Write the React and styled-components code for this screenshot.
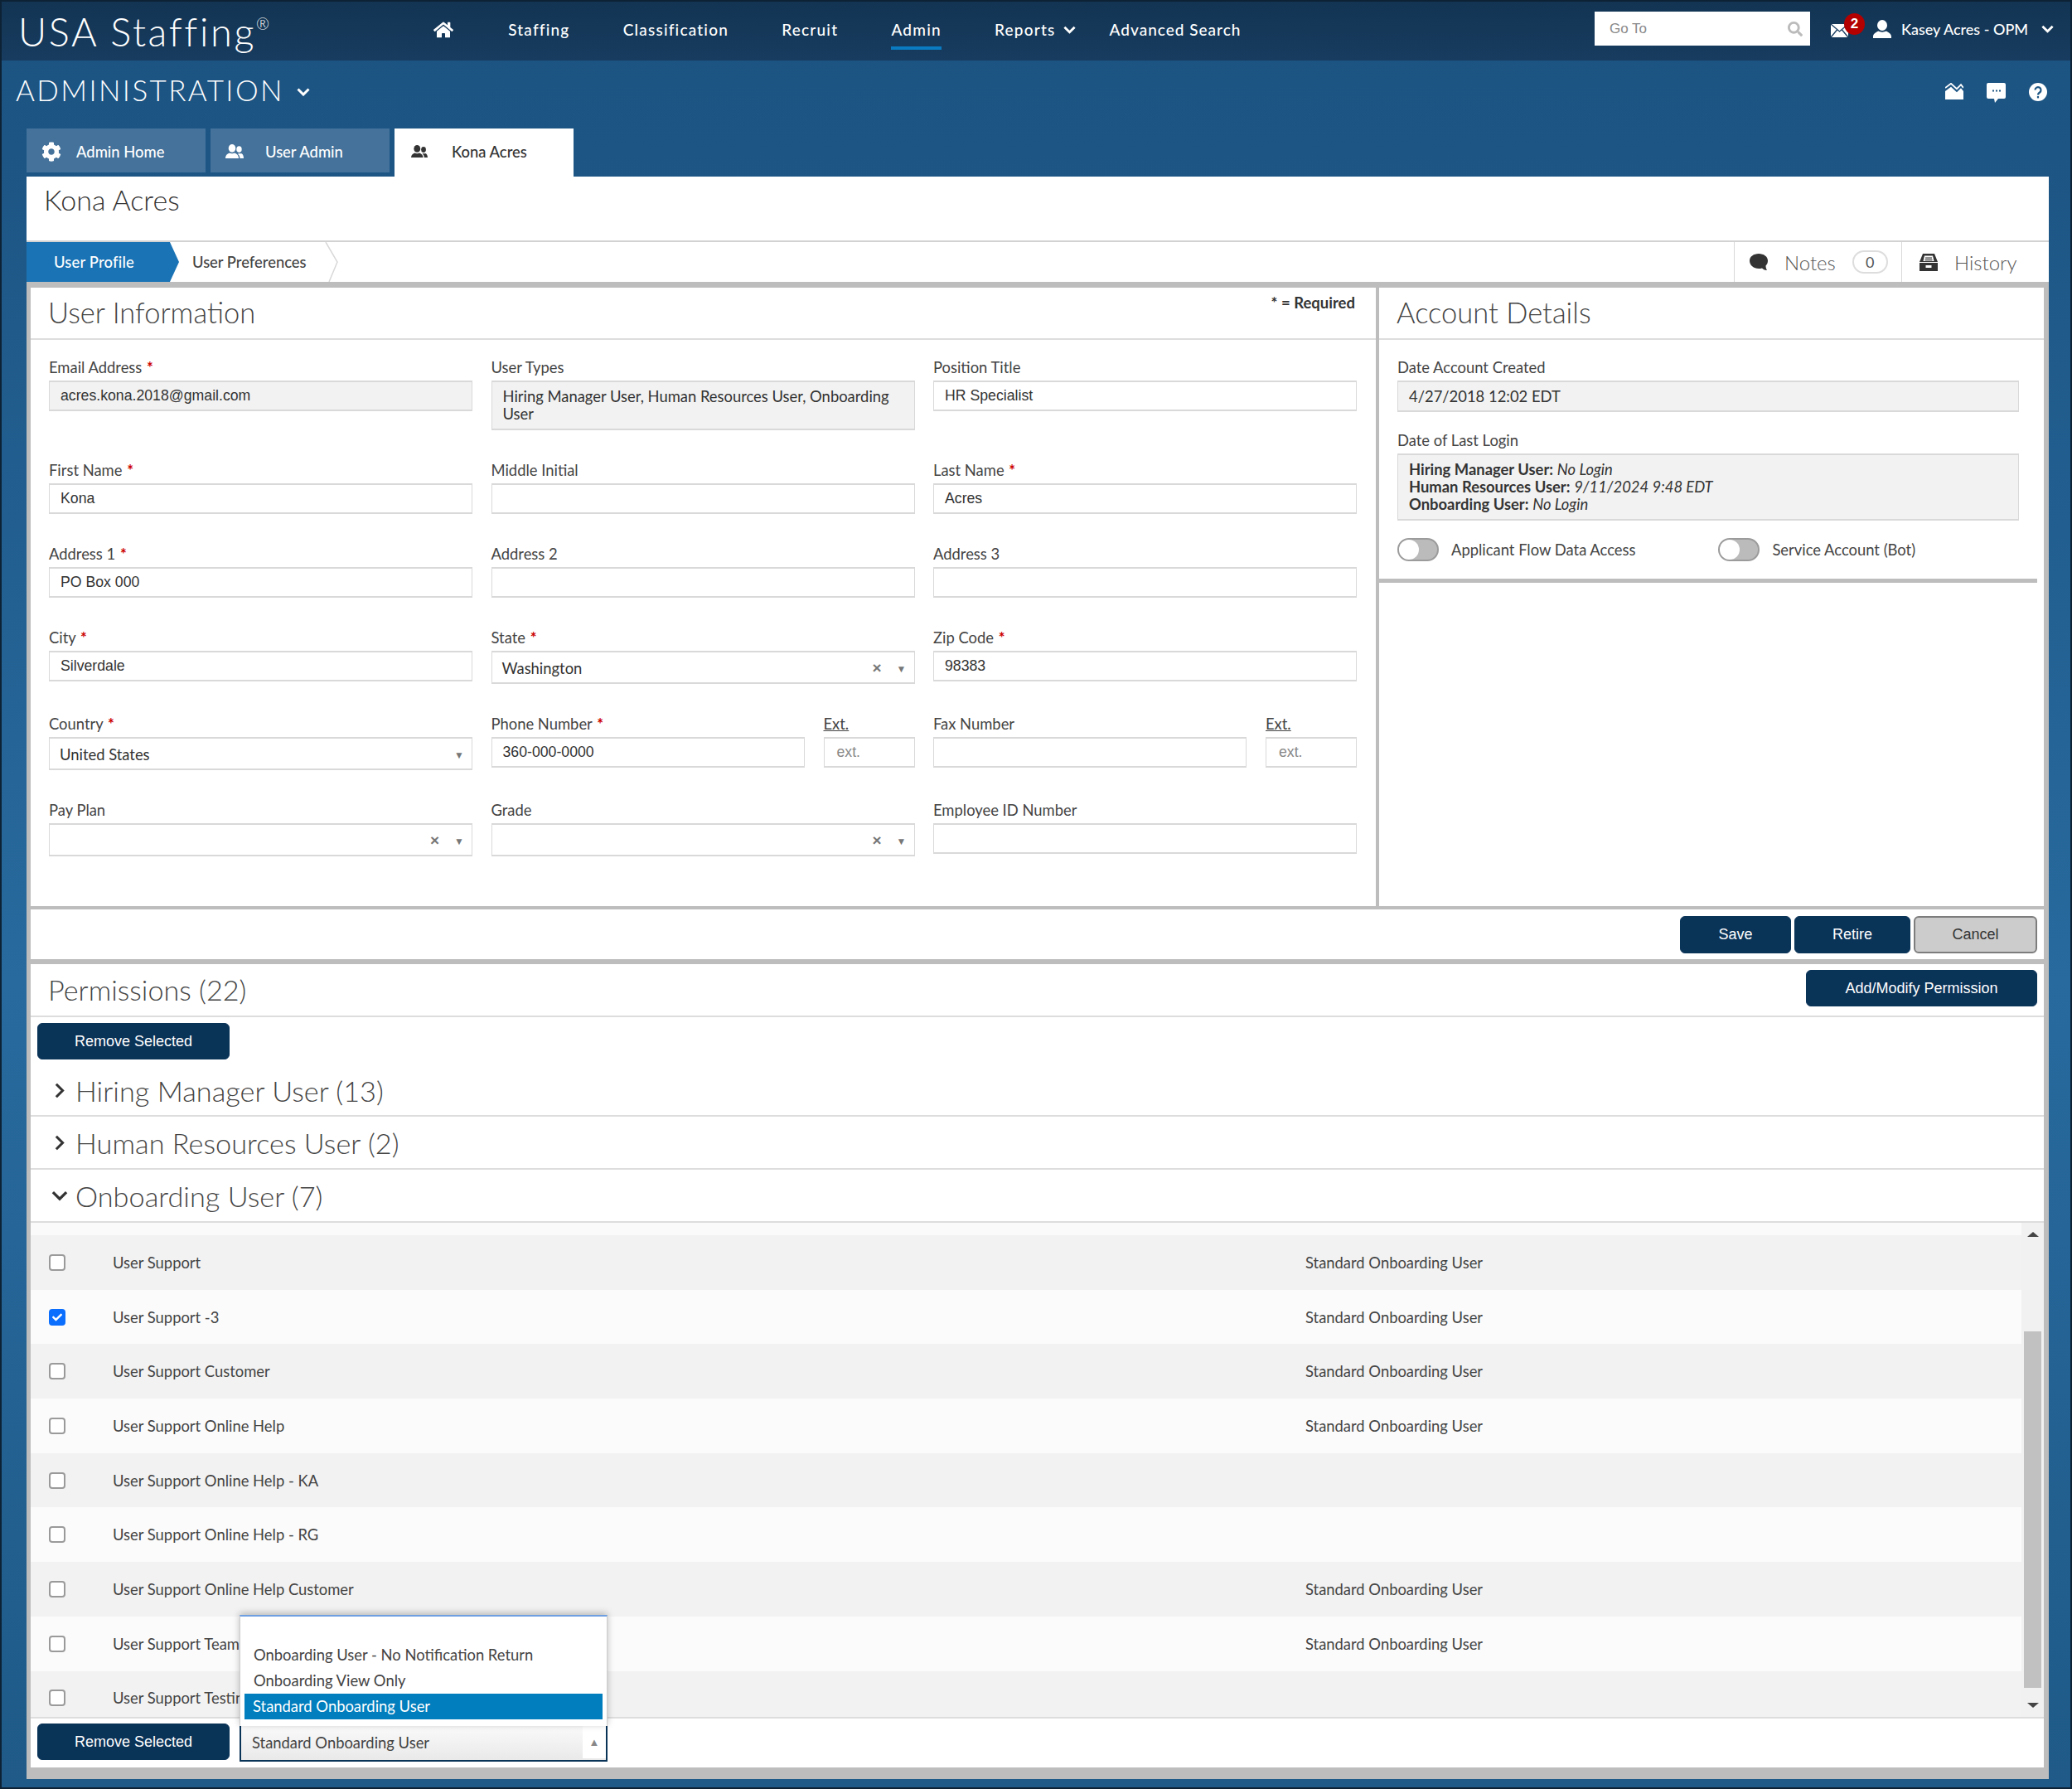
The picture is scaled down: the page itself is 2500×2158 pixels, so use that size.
import React from "react";
import styled, { createGlobalStyle } from "styled-components";
import { FaHome, FaCog, FaSearch, FaCheck } from "react-icons/fa";

const GlobalStyle = createGlobalStyle`
  html, body { margin: 0; padding: 0; background: #1f5a88; }
  * { box-sizing: border-box; }
  body { font-family: "Lato", "Open Sans", sans-serif; color: #444; }
`;

const Frame = styled.div`
  position: relative;
  width: 2500px;
  height: 2158px;
  overflow: hidden;
  display: flex;
  flex-direction: column;
  background: linear-gradient(180deg, #1b5280 0%, #286a9e 55%, #1f5a88 100%);
  outline: 2px solid #0d2235;
  outline-offset: -2px;
`;

const TopBar = styled.header`
  height: 73px;
  flex: none;
  display: flex;
  align-items: center;
  padding-left: 22px;
  background: linear-gradient(180deg, #133453, #173c5f);
  color: #fff;
`;

const Logo = styled.div`
  width: 501px;
  font-size: 47px;
  font-weight: 300;
  letter-spacing: 2.6px;
  line-height: 73px;
  padding-top: 4px;
  sup { font-size: 19px; vertical-align: 20px; line-height: 0; letter-spacing: 0; }
`;

const Nav = styled.nav`
  display: flex;
  align-items: center;
  gap: 64.2px;
  flex: 1;
`;

const NavItem = styled.a`
  position: relative;
  display: flex;
  align-items: center;
  gap: 10px;
  font-size: 19px;
  font-weight: 500;
  letter-spacing: 1.2px;
  height: 40px;
  margin-top: -2px;
  color: #fff;
  ${(p) => p.$active && `
    &::after { content: ""; position: absolute; left: 0; right: 0; bottom: -4px; height: 4px; background: #0a7bc0; }
  `}
  ${(p) => p.$tight && `margin-right: -24px;`}
  ${(p) => p.$home && `margin-right: 2px;`}
  ${(p) => p.$snug && `letter-spacing: 1px;`}
`;

const SearchBox = styled.div`
  width: 260px;
  height: 41px;
  margin-top: -4px;
  background: #fff;
  display: flex;
  align-items: center;
  justify-content: space-between;
  padding: 0 9px 0 18px;
  font-family: "Liberation Sans", sans-serif;
  font-size: 17px;
  color: #888;
  svg { color: #bbb; font-size: 18px; }
`;

const MailWrap = styled.div`
  position: relative;
  margin-left: 24px;
  width: 52px;
  height: 41px;
  display: flex;
  align-items: center;
`;

const Badge = styled.span`
  position: absolute;
  left: 17px;
  top: 0;
  width: 25px;
  height: 26px;
  border-radius: 50%;
  background: #b30000;
  color: #fff;
  font: 700 17px/26px "Liberation Sans", sans-serif;
  text-align: center;
`;

const UserMenu = styled.div`
  display: flex;
  align-items: center;
  font-size: 18px;
  width: 240px;
  margin-top: -3px;
  font-weight: 500;
  color: #fff;
  span { margin: 0 16px 0 12px; }
`;

const SubHeader = styled.div`
  height: 82px;
  flex: none;
  display: flex;
  align-items: center;
  justify-content: space-between;
  padding: 0 30px 8px 19px;
  color: #fff;
`;

const AreaTitle = styled.h1`
  margin: 0 0 5px;
  font-size: 35px;
  font-weight: 300;
  letter-spacing: 2.4px;
  display: flex;
  align-items: center;
  gap: 15px;
  svg { margin-top: 7px; }
`;

const QuickIcons = styled.div`
  display: flex;
  gap: 28px;
  padding-top: 3px;
`;

const TabStrip = styled.div`
  height: 58px;
  flex: none;
  display: flex;
  align-items: flex-end;
  gap: 6px;
  margin-left: 32px;
`;

const Tab = styled.div`
  width: 216px;
  display: flex;
  align-items: center;
  font-size: 18.4px;
  font-weight: 500;
  height: ${(p) => (p.$active ? "58px" : "53px")};
  margin-bottom: ${(p) => (p.$active ? "0" : "5px")};
  background: ${(p) => (p.$active ? "#fff" : "#44729b")};
  color: ${(p) => (p.$active ? "#333" : "#fff")};
  padding: ${(p) => (p.$active ? "0 0 3px 20px" : "2px 0 0 18px")};
  svg { margin-right: ${(p) => p.$gap}px; flex: none; }
`;

const Panel = styled.main`
  margin-left: 32px;
  width: 2440px;
  height: 1933px;
  flex: none;
  background: #bdbdbd;
  display: flex;
  flex-direction: column;
`;

const TitleBar = styled.div`
  height: 79px;
  flex: none;
  background: #fff;
  padding: 7px 0 0 21px;
  font-size: 34px;
  font-weight: 300;
  color: #333;
  border-bottom: 2px solid #d2d2d2;
`;

const StepRow = styled.div`
  height: 48px;
  flex: none;
  background: #fff;
  display: flex;
  align-items: stretch;
`;

const Step = styled.div`
  width: ${(p) => p.$w}px;
  display: flex;
  align-items: center;
  font-size: 18.4px;
  font-weight: 500;
  letter-spacing: ${(p) => (p.$active ? "0.2px" : "0")};
  padding-left: ${(p) => p.$pad}px;
  color: ${(p) => (p.$active ? "#fff" : "#444")};
  background: ${(p) => (p.$active ? "#1a73b5" : "transparent")};
  clip-path: ${(p) => (p.$active ? "polygon(0 0, 94% 0, 100% 50%, 94% 100%, 0 100%)" : "none")};
`;

const StepTip = styled.svg`
  width: 16px;
  height: 48px;
  margin-left: 2px;
`;

const StepTools = styled.div`
  margin-left: auto;
  display: flex;
`;

const StepTool = styled.div`
  display: flex;
  align-items: center;
  font-size: 24px;
  font-weight: 300;
  color: #555;
  border-left: 1px solid #d8d8d8;
  padding-left: ${(p) => p.$pad}px;
  width: ${(p) => p.$w}px;
  svg { color: #333; margin-right: 20px; flex: none; }
`;

const CountPill = styled.span`
  margin-left: 20px;
  width: 43px;
  height: 28px;
  border: 2px solid #ddd;
  border-radius: 14px;
  text-align: center;
  font-size: 18px;
  font-weight: 400;
  line-height: 24px;
`;

const Content = styled.div`
  flex: 1;
  padding: 7px 6px 14px 5px;
  display: flex;
  flex-direction: column;
`;

const FormRow = styled.div`
  height: 746px;
  flex: none;
  display: flex;
  gap: 4px;
`;

const InfoPanel = styled.section`
  width: 1623px;
  background: #fff;
`;

const AccountPanel = styled.section`
  flex: 1;
  background: #fff;
`;

const SectionHead = styled.div`
  height: 63px;
  display: flex;
  justify-content: space-between;
  align-items: flex-start;
  border-bottom: 2px solid #ddd;
  padding: 0 25px 0 21px;
  h2 { margin: 9px 0 0; font-size: 34.5px; font-weight: 300; color: #444; }
`;

const RequiredNote = styled.b`
  font-size: 18.5px;
  font-weight: 700;
  margin-top: 7px;
  color: #333;
`;

const FormGrid = styled.div`
  display: grid;
  grid-template-columns: repeat(3, 511px);
  column-gap: 22.5px;
  row-gap: 36px;
  padding: 21px 0 0 22px;
`;

const Field = styled.div`
  display: flex;
  flex-direction: column;
  min-width: 0;
`;

const SplitField = styled.div`
  display: grid;
  grid-template-columns: 1fr 110px;
  column-gap: 23px;
`;

const Label = styled.label`
  height: 28px;
  line-height: 24px;
  font-size: 18.4px;
  color: #444;
  white-space: nowrap;
  ${(p) => p.$abbr && `text-decoration: underline;`}
  i { color: #c00; font-style: normal; font-weight: 700; margin-left: 1px; }
`;

const Input = styled.div`
  height: 37px;
  border: solid #d9d9d9;
  border-width: 2px 1px;
  background: ${(p) => (p.$readonly ? "#f2f2f2" : "#fff")};
  padding: 0 13px;
  font: 17.7px/33px "Liberation Sans", sans-serif;
  color: ${(p) => (p.$ghost ? "#888" : "#333")};
  ${(p) => p.$ghost && `padding-left: 15px;`}
`;

const TextBox = styled.div`
  min-height: ${(p) => p.$h}px;
  border: solid #d9d9d9;
  border-width: 2px 1px;
  background: #f2f2f2;
  padding: ${(p) => p.$py}px 13px 0;
  font-size: 18.4px;
  line-height: 21px;
  color: #333;
`;

const SelectBox = styled.div`
  height: 40px;
  border: solid #d9d9d9;
  border-width: 2px 1px;
  background: #fff;
  display: flex;
  align-items: center;
  padding: 2px 9px 0 12px;
  font-size: 18.4px;
  color: #333;
  span { flex: 1; }
  b { font: 700 19px "Liberation Sans", sans-serif; color: #777; margin-right: 18px; }
  em { font-style: normal; font-size: 12px; color: #777; }
`;

const AccountBody = styled.div`
  height: 293px;
  margin-right: 8px;
  padding: 21px 22px 0 22px;
  border-bottom: 5px solid #bdbdbd;
`;

const AccountField = styled(Field)`
  margin-bottom: ${(p) => p.$mb}px;
`;

const ToggleRow = styled.div`
  display: flex;
  align-items: center;
  margin-top: 21px;
  font-size: 18.4px;
`;

const Toggle = styled.span`
  width: 50px;
  height: 28px;
  border-radius: 14px;
  background: #bbb;
  border: 2px solid #9b9b9b;
  display: flex;
  flex: none;
  margin-left: ${(p) => p.$ml || 0}px;
  margin-right: 15px;
  &::before { content: ""; width: 24px; height: 24px; border-radius: 50%; background: #fff; }
`;

const ActionRow = styled.div`
  height: 60px;
  margin-top: 4px;
  flex: none;
  background: #fff;
  display: flex;
  justify-content: flex-end;
  align-items: flex-start;
  gap: 4px;
  padding: 8px 8px 0 0;
`;

const Button = styled.button`
  height: ${(p) => p.$h || 44}px;
  width: ${(p) => p.$w}px;
  padding: 0;
  border: 1px solid ${(p) => (p.$grey ? "#7d7d7d" : "#0a3358")};
  border-width: ${(p) => (p.$grey ? "2px" : "1px")};
  border-radius: 6px;
  background: ${(p) => (p.$grey ? "#cccccc" : "#0a3358")};
  color: ${(p) => (p.$grey ? "#333" : "#fff")};
  font: 18px "Liberation Sans", sans-serif;
  flex: none;
`;

const Permissions = styled.section`
  margin-top: 6px;
  flex: 1;
  background: #fff;
  display: flex;
  flex-direction: column;
`;

const PermHead = styled.div`
  height: 64px;
  flex: none;
  display: flex;
  justify-content: space-between;
  align-items: flex-start;
  border-bottom: 2px solid #ddd;
  padding: 7px 8px 0 21px;
  h2 { margin: 3px 0 0; font-size: 34.2px; font-weight: 300; color: #444; }
`;

const RemoveRow = styled.div`
  height: 58px;
  flex: none;
  padding: 7px 0 0 8px;
`;

const Group = styled.div`
  height: ${(p) => p.$h}px;
  flex: none;
  display: flex;
  align-items: center;
  padding-left: 24px;
  border-bottom: 2px solid #ddd;
  font-size: 34.3px;
  font-weight: 300;
  color: #444;
`;

const GroupIcon = styled.span`
  width: 21px;
  margin-right: 9px;
  display: flex;
  justify-content: center;
  color: #333;
`;

const TableArea = styled.div`
  position: relative;
  height: 596px;
  flex: none;
  display: flex;
  background: #fafafa;
  overflow: hidden;
`;

const Rows = styled.div`
  flex: 1;
  padding-top: 15px;
`;

const PermRow = styled.div`
  height: 65.7px;
  display: grid;
  grid-template-columns: 77px 1439px 1fr;
  align-items: center;
  padding-left: 22px;
  font-size: 18.4px;
  color: #444;
  white-space: nowrap;
  background: ${(p) => (p.$odd ? "#f2f2f2" : "#fbfbfb")};
`;

const Check = styled.span`
  width: 20px;
  height: 20px;
  border-radius: 4px;
  border: 2px solid ${(p) => (p.$on ? "#0b6efd" : "#9a9a9a")};
  background: ${(p) => (p.$on ? "#0b6efd" : "#fff")};
  display: flex;
  align-items: center;
  justify-content: center;
  color: #fff;
  font-size: 12px;
`;

const ScrollTrack = styled.div`
  width: 27px;
  flex: none;
  background: #f1f1f1;
  position: relative;
  padding: 131px 3px 0;
`;

const ScrollThumb = styled.div`
  height: 430px;
  background: #c1c1c1;
`;

const ScrollArrow = styled.span`
  position: absolute;
  left: 7px;
  width: 0;
  height: 0;
  border-left: 7px solid transparent;
  border-right: 7px solid transparent;
  ${(p) => (p.$up ? "top: 11px; border-bottom: 6px solid #444;" : "bottom: 11px; border-top: 6px solid #444;")}
`;

const Footer = styled.div`
  height: 61px;
  flex: none;
  border-top: 2px solid #ddd;
  display: flex;
  gap: 12px;
  padding: 6px 0 0 8px;
`;

const FooterSelect = styled.div`
  position: relative;
  width: 444px;
  height: 43px;
  margin-top: 3px;
  border: 2px solid #0a3358;
  border-top: 0;
  display: flex;
  align-items: center;
  background: linear-gradient(180deg, #fafafa, #e9e9e9);
  padding: 0 0 2px 13px;
  font-size: 18.4px;
  color: #444;
  span { flex: 1; }
  em { width: 28px; height: 100%; background: #fff; text-align: center; line-height: 38px; font-style: normal; font-size: 13px; color: #888; }
`;

const DropList = styled.div`
  position: absolute;
  left: -2px;
  bottom: 100%;
  width: 444px;
  height: 134px;
  background: #fff;
  border-top: 2px solid #6f9fe0;
  border-left: 1px solid #ccc;
  border-right: 1px solid #ccc;
  box-shadow: 0 -2px 8px rgba(0, 0, 0, 0.25);
  padding: 31px 5px 0;
  font-size: 18.4px;
  color: #444;
`;

const DropOption = styled.div`
  height: 31px;
  line-height: 31px;
  padding-left: ${(p) => (p.$sel ? "10px" : "11px")};
  background: ${(p) => (p.$sel ? "#007ebd" : "transparent")};
  color: ${(p) => (p.$sel ? "#fff" : "#444")};
`;

const Chevron = ({ dir = "down", w, h, sw = 3 }) => (
  <svg width={w} height={h} viewBox={dir === "down" ? "0 0 16 10" : "0 0 10 16"} fill="none" stroke="currentColor" strokeWidth={sw}>
    <path d={dir === "down" ? "M1.5 1.5L8 8l6.5-6.5" : "M1.5 1.5L8 8l-6.5 6.5"} />
  </svg>
);

const PeopleIcon = ({ w = 22 }) => (
  <svg width={w} height={w * 0.78} viewBox="0 0 22 17" fill="currentColor">
    <ellipse cx="8" cy="4.8" rx="4.3" ry="4.8" />
    <path d="M0 17c0-4 2.5-5.5 5-6.5 1.5 1 4.5 1 6 0 2.5 1 5 2.5 5 6.500z" />
    <ellipse cx="16.5" cy="6" rx="3.2" ry="3.8" />
    <path d="M16 10.8c1 .6 2 .6 3 0 1.5.6 3 2 3 6.200h-4.500c0-2.500-1-4.500-2.500-5.200z" />
  </svg>
);

const MailIcon = () => (
  <svg width="23" height="18" viewBox="0 0 23 18">
    <path d="M1 1h21v16H1z" fill="#fff" />
    <path d="M1 1l10.5 9L22 1M1 17l7.5-9M22 17l-7.5-9" fill="none" stroke="#173c5f" strokeWidth="1.3" />
  </svg>
);

const UserIcon = () => (
  <svg width="22" height="22" viewBox="0 0 22 22" fill="#fff">
    <ellipse cx="11" cy="6.5" rx="6" ry="6.5" />
    <path d="M0 22v-2c0-3 3-5 6.5-6.5 2 1.5 7 1.5 9 0C19 15 22 17 22 20v2z" />
  </svg>
);

const OpenMailIcon = () => (
  <svg width="22" height="20" viewBox="0 0 22 20" fill="#fff">
    <path d="M0 6L7 .8l7 6.4 5-5L22 6" fill="none" stroke="#fff" strokeWidth="1.8" />
    <path d="M0 10l7-5.2 7 6.4 5-5 3 3.800V20H0z" />
  </svg>
);

const ChatIcon = () => (
  <svg width="23" height="24" viewBox="0 0 23 24" fill="#fff">
    <path d="M2 0h19a2 2 0 0 1 2 2v15a2 2 0 0 1-2 2h-7l-4 5-1-5H2a2 2 0 0 1-2-2V2a2 2 0 0 1 2-2z" />
    <path d="M7 8.5h2v2H7zM11 8.5h2v2h-2zM15 8.5h2v2h-2z" fill="#1d5684" />
  </svg>
);

const HelpIcon = () => (
  <svg width="22" height="22" viewBox="0 0 22 22">
    <circle cx="11" cy="11" r="11" fill="#fff" />
    <path d="M7.5 8.5a3.500 3.500 0 1 1 5.500 3c-1.300.9-2 1.500-2 3" fill="none" stroke="#1d5684" strokeWidth="2.2" />
    <rect x="9.9" y="16" width="2.2" height="2.4" fill="#1d5684" />
  </svg>
);

const NotesIcon = () => (
  <svg width="22" height="20" viewBox="0 0 22 20">
    <path d="M11 0c6 0 11 3.500 11 8.500 0 2.500-1 4.500-2.500 6 0 2 .5 4 1.500 5.500-3 0-5-1.500-6-2.500-1.300.4-2.600.5-4 .5C5 18 0 14 0 8.500 0 3.500 5 0 11 0z" fill="#333" />
  </svg>
);

const HistoryIcon = () => (
  <svg width="22" height="21" viewBox="0 0 22 21">
    <path d="M4 0h14l4 10v11H0V10z" fill="#333" />
    <path d="M6 2.500h10l1.500 6.500h-13z" fill="#fff" />
    <path d="M7 4.500h8v1.200H7zM6.500 7h9v1.200h-9z" fill="#333" />
    <rect x="0" y="10" width="22" height="1" fill="#fff" />
    <rect x="7.500" y="14" width="7" height="3" fill="#fff" />
  </svg>
);

const perms = [
  ["User Support", true],
  ["User Support -3", true, true],
  ["User Support Customer", true],
  ["User Support Online Help", true],
  ["User Support Online Help - KA", false],
  ["User Support Online Help - RG", false],
  ["User Support Online Help Customer", true],
  ["User Support Team", true],
  ["User Support Testing", false]
];

const Req = () => <i>*</i>;

export default function App() {
  return (
    <Frame>
      <GlobalStyle />
      <TopBar>
        <Logo>
          USA Staffing<sup>®</sup>
        </Logo>
        <Nav>
          <NavItem $home>
            <FaHome size={24} />
          </NavItem>
          <NavItem>Staffing</NavItem>
          <NavItem>Classification</NavItem>
          <NavItem>Recruit</NavItem>
          <NavItem $active>Admin</NavItem>
          <NavItem $tight>
            Reports <Chevron w={15} h={10} />
          </NavItem>
          <NavItem $snug>Advanced Search</NavItem>
        </Nav>
        <SearchBox>
          Go To
          <FaSearch />
        </SearchBox>
        <MailWrap>
          <MailIcon />
          <Badge>2</Badge>
        </MailWrap>
        <UserMenu>
          <UserIcon />
          <span>Kasey Acres - OPM</span>
          <Chevron w={15} h={10} />
        </UserMenu>
      </TopBar>

      <SubHeader>
        <AreaTitle>
          ADMINISTRATION <Chevron w={16} h={10} />
        </AreaTitle>
        <QuickIcons>
          <OpenMailIcon />
          <ChatIcon />
          <HelpIcon />
        </QuickIcons>
      </SubHeader>

      <TabStrip>
        <Tab $gap={18}>
          <FaCog size={24} />
          Admin Home
        </Tab>
        <Tab $gap={26}>
          <PeopleIcon />
          User Admin
        </Tab>
        <Tab $active $gap={29}>
          <PeopleIcon w={20} />
          Kona Acres
        </Tab>
      </TabStrip>

      <Panel>
        <TitleBar>Kona Acres</TitleBar>
        <StepRow>
          <Step $active $w={184} $pad={33}>
            User Profile
          </Step>
          <Step $w={174} $pad={16}>
            User Preferences
          </Step>
          <StepTip viewBox="0 0 16 48">
            <path d="M1 0l14 24-10 24" fill="none" stroke="#d8d8d8" strokeWidth="1.5" />
          </StepTip>
          <StepTools>
            <StepTool $w={202} $pad={18}>
              <NotesIcon />
              Notes
              <CountPill>0</CountPill>
            </StepTool>
            <StepTool $w={178} $pad={21}>
              <HistoryIcon />
              History
            </StepTool>
          </StepTools>
        </StepRow>

        <Content>
          <FormRow>
            <InfoPanel>
              <SectionHead>
                <h2>User Information</h2>
                <RequiredNote>* = Required</RequiredNote>
              </SectionHead>
              <FormGrid>
                <Field>
                  <Label>
                    Email Address <Req />
                  </Label>
                  <Input $readonly>acres.kona.2018@gmail.com</Input>
                </Field>
                <Field>
                  <Label>User Types</Label>
                  <TextBox $h={60} $py={7}>
                    Hiring Manager User, Human Resources User, Onboarding User
                  </TextBox>
                </Field>
                <Field>
                  <Label>Position Title</Label>
                  <Input>HR Specialist</Input>
                </Field>

                <Field>
                  <Label>
                    First Name <Req />
                  </Label>
                  <Input>Kona</Input>
                </Field>
                <Field>
                  <Label>Middle Initial</Label>
                  <Input />
                </Field>
                <Field>
                  <Label>
                    Last Name <Req />
                  </Label>
                  <Input>Acres</Input>
                </Field>

                <Field>
                  <Label>
                    Address 1 <Req />
                  </Label>
                  <Input>PO Box 000</Input>
                </Field>
                <Field>
                  <Label>Address 2</Label>
                  <Input />
                </Field>
                <Field>
                  <Label>Address 3</Label>
                  <Input />
                </Field>

                <Field>
                  <Label>
                    City <Req />
                  </Label>
                  <Input>Silverdale</Input>
                </Field>
                <Field>
                  <Label>
                    State <Req />
                  </Label>
                  <SelectBox>
                    <span>Washington</span>
                    <b>×</b>
                    <em>▼</em>
                  </SelectBox>
                </Field>
                <Field>
                  <Label>
                    Zip Code <Req />
                  </Label>
                  <Input>98383</Input>
                </Field>

                <Field>
                  <Label>
                    Country <Req />
                  </Label>
                  <SelectBox>
                    <span>United States</span>
                    <em>▼</em>
                  </SelectBox>
                </Field>
                <SplitField>
                  <Field>
                    <Label>
                      Phone Number <Req />
                    </Label>
                    <Input>360-000-0000</Input>
                  </Field>
                  <Field>
                    <Label $abbr>Ext.</Label>
                    <Input $ghost>ext.</Input>
                  </Field>
                </SplitField>
                <SplitField>
                  <Field>
                    <Label>Fax Number</Label>
                    <Input />
                  </Field>
                  <Field>
                    <Label $abbr>Ext.</Label>
                    <Input $ghost>ext.</Input>
                  </Field>
                </SplitField>

                <Field>
                  <Label>Pay Plan</Label>
                  <SelectBox>
                    <span />
                    <b>×</b>
                    <em>▼</em>
                  </SelectBox>
                </Field>
                <Field>
                  <Label>Grade</Label>
                  <SelectBox>
                    <span />
                    <b>×</b>
                    <em>▼</em>
                  </SelectBox>
                </Field>
                <Field>
                  <Label>Employee ID Number</Label>
                  <Input />
                </Field>
              </FormGrid>
            </InfoPanel>

            <AccountPanel>
              <SectionHead>
                <h2>Account Details</h2>
              </SectionHead>
              <AccountBody>
                <AccountField $mb={22}>
                  <Label>Date Account Created</Label>
                  <TextBox $h={38} $py={7}>
                    4/27/2018 12:02 EDT
                  </TextBox>
                </AccountField>
                <AccountField>
                  <Label>Date of Last Login</Label>
                  <TextBox $h={81} $py={7}>
                    <b>Hiring Manager User:</b> <i>No Login</i>
                    <br />
                    <b>Human Resources User:</b> <i>9/11/2024 9:48 EDT</i>
                    <br />
                    <b>Onboarding User:</b> <i>No Login</i>
                  </TextBox>
                </AccountField>
                <ToggleRow>
                  <Toggle />
                  Applicant Flow Data Access
                  <Toggle $ml={100} />
                  Service Account (Bot)
                </ToggleRow>
              </AccountBody>
            </AccountPanel>
          </FormRow>

          <ActionRow>
            <Button $w={134} $h={45}>Save</Button>
            <Button $w={140} $h={45}>Retire</Button>
            <Button $w={149} $h={45} $grey>Cancel</Button>
          </ActionRow>

          <Permissions>
            <PermHead>
              <h2>Permissions (22)</h2>
              <Button $w={279}>Add/Modify Permission</Button>
            </PermHead>
            <RemoveRow>
              <Button $w={232}>Remove Selected</Button>
            </RemoveRow>
            <Group $h={62}>
              <GroupIcon>
                <Chevron dir="right" w={12} h={19} sw={2.6} />
              </GroupIcon>
              Hiring Manager User (13)
            </Group>
            <Group $h={64}>
              <GroupIcon>
                <Chevron dir="right" w={12} h={19} sw={2.6} />
              </GroupIcon>
              Human Resources User (2)
            </Group>
            <Group $h={64}>
              <GroupIcon>
                <Chevron w={20} h={13} sw={2.6} />
              </GroupIcon>
              Onboarding User (7)
            </Group>
            <TableArea>
              <Rows>
                {perms.map(([name, standard, checked], i) => (
                  <PermRow key={name} $odd={i % 2 === 0}>
                    <Check $on={checked}>{checked && <FaCheck />}</Check>
                    <span>{name}</span>
                    <span>{standard ? "Standard Onboarding User" : ""}</span>
                  </PermRow>
                ))}
              </Rows>
              <ScrollTrack>
                <ScrollArrow $up />
                <ScrollThumb />
                <ScrollArrow />
              </ScrollTrack>
            </TableArea>
            <Footer>
              <Button $w={232}>Remove Selected</Button>
              <FooterSelect>
                <DropList>
                  <DropOption>Onboarding User - No Notification Return</DropOption>
                  <DropOption>Onboarding View Only</DropOption>
                  <DropOption $sel>Standard Onboarding User</DropOption>
                </DropList>
                <span>Standard Onboarding User</span>
                <em>▲</em>
              </FooterSelect>
            </Footer>
          </Permissions>
        </Content>
      </Panel>
    </Frame>
  );
}
